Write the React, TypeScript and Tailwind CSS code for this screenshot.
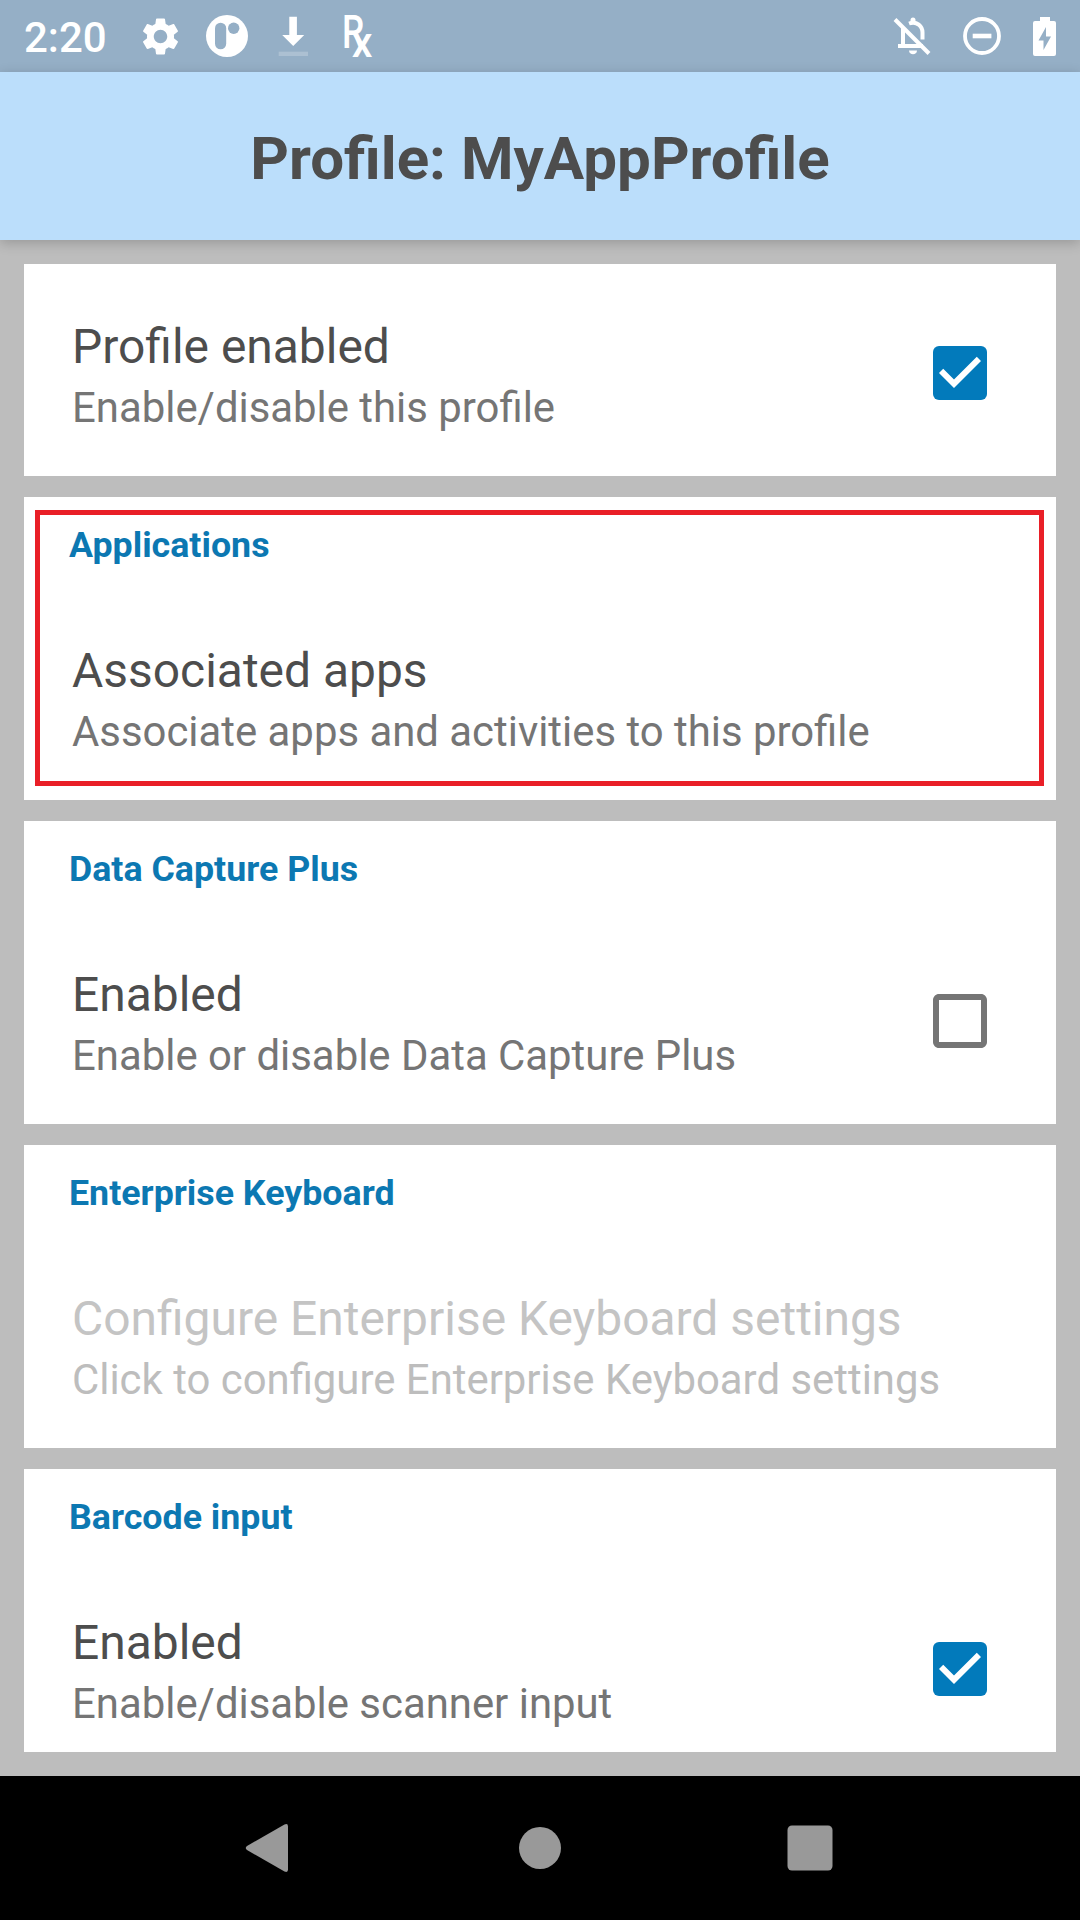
import React from "react";

function Checkbox({ checked }: { checked: boolean }) {
  return (
    <svg viewBox="0 0 24 24" className="h-[72px] w-[72px] shrink-0">
      {checked ? (
        <>
          <rect x="3" y="3" width="18" height="18" rx="2" fill="#027abb" />
          <path d="M10 17l-5-5 1.41-1.41L10 14.17l7.59-7.59L19 8l-9 9z" fill="#fff" />
        </>
      ) : (
        <path
          d="M19 5v14H5V5h14m0-2H5c-1.1 0-2 .9-2 2v14c0 1.1.9 2 2 2h14c1.1 0 2-.9 2-2V5c0-1.1-.9-2-2-2z"
          fill="#757575"
        />
      )}
    </svg>
  );
}

type Item = {
  category?: string;
  title: string;
  summary: string;
  checked?: boolean;
  disabled?: boolean;
  highlighted?: boolean;
};

const items: Item[] = [
  { title: "Profile enabled", summary: "Enable/disable this profile", checked: true },
  {
    category: "Applications",
    title: "Associated apps",
    summary: "Associate apps and activities to this profile",
    highlighted: true,
  },
  {
    category: "Data Capture Plus",
    title: "Enabled",
    summary: "Enable or disable Data Capture Plus",
    checked: false,
  },
  {
    category: "Enterprise Keyboard",
    title: "Configure Enterprise Keyboard settings",
    summary: "Click to configure Enterprise Keyboard settings",
    disabled: true,
  },
  { category: "Barcode input", title: "Enabled", summary: "Enable/disable scanner input", checked: true },
];

function Card({ item }: { item: Item }) {
  return (
    <section className="relative shrink-0 bg-white">
      {item.category && (
        <h2 className="h-[91px] pt-[27px] pl-[45px] text-[35.75px] leading-[42px] font-bold text-[#0c78b2]">
          {item.category}
        </h2>
      )}
      <div className="flex h-[212px] items-center justify-between pt-[6px] pr-[60px] pl-[48px]">
        <div className="pt-[4px] whitespace-nowrap">
          <p className={`text-[47.95px] leading-[56px] ${item.disabled ? "text-[#c4c4c4]" : "text-[#4d4d4d]"}`}>
            {item.title}
          </p>
          <p className={`mt-[8px] text-[41.88px] leading-[49px] ${item.disabled ? "text-[#bdbdbd]" : "text-[#757575]"}`}>
            {item.summary}
          </p>
        </div>
        {item.checked !== undefined && <Checkbox checked={item.checked} />}
      </div>
      {item.highlighted && (
        <div className="absolute top-[13px] right-[12px] bottom-[14px] left-[11px] border-5 border-[#e91f27]" />
      )}
    </section>
  );
}

function StatusBar() {
  return (
    <div className="flex h-[72px] shrink-0 items-center bg-[#95afc6] pl-[24px] text-white">
      <span className="w-[114px] pt-[2px] text-[42px] leading-[49px] font-medium">2:20</span>
      <svg viewBox="0 0 24 24" className="h-[45px] w-[45px]" fill="#fff">
        <path d="M19.14 12.94c.04-.3.06-.61.06-.94 0-.32-.02-.64-.07-.94l2.03-1.58c.18-.14.23-.41.12-.61l-1.92-3.32c-.12-.22-.37-.29-.59-.22l-2.39.96c-.5-.38-1.03-.7-1.62-.94l-.36-2.54c-.04-.24-.24-.41-.48-.41h-3.84c-.24 0-.43.17-.47.41l-.36 2.54c-.59.24-1.13.57-1.62.94l-2.39-.96c-.22-.08-.47 0-.59.22L2.74 8.87c-.12.21-.08.47.12.61l2.03 1.58c-.05.3-.09.63-.09.94s.02.64.07.94l-2.03 1.58c-.18.14-.23.41-.12.61l1.92 3.32c.12.22.37.29.59.22l2.39-.96c.5.38 1.03.7 1.62.94l.36 2.54c.05.24.24.41.48.41h3.84c.24 0 .44-.17.47-.41l.36-2.54c.59-.24 1.13-.56 1.62-.94l2.39.96c.22.08.47 0 .59-.22l1.92-3.32c.12-.22.07-.47-.12-.61l-2.01-1.58zM12 15.6c-1.98 0-3.6-1.62-3.6-3.6s1.62-3.6 3.6-3.6 3.6 1.62 3.6 3.6-1.62 3.6-3.6 3.6z" />
      </svg>
      <svg viewBox="0 0 42 42" className="ml-[23px] h-[42px] w-[42px]">
        <circle cx="21" cy="21" r="21" fill="#fff" />
        <rect x="9" y="7.7" width="11.2" height="26.6" rx="5.6" fill="#95afc6" />
        <circle cx="27.7" cy="13.2" r="5.7" fill="#95afc6" />
      </svg>
      <svg viewBox="0 0 30 40" className="ml-[30px] h-[40px] w-[30px]" fill="#fff">
        <path d="M11.3 .7h7.6V19h7.3L15.2 30 4.2 19h7.1z" />
        <rect x=".7" y="35.7" width="29.3" height="4.3" opacity=".22" />
      </svg>
      <svg viewBox="0 0 40 72" className="ml-[34px] h-[72px] w-[40px] overflow-visible" fill="#fff">
        <text transform="translate(0 48.3) scale(.77 1)" fontSize="46" fontWeight="500" fontFamily="Roboto, sans-serif">
          R
        </text>
        <text transform="translate(9.8 57) scale(.96 1)" fontSize="43" fontWeight="500" fontFamily="Roboto, sans-serif">
          x
        </text>
      </svg>
      <div className="ml-auto flex items-center pr-[24px]">
        <svg viewBox="0 0 38 38" className="h-[38px] w-[38px]" fill="none" stroke="#fff" strokeWidth="4">
          <path d="M10 11v18M5 29h25M16 6.5c8-3 13.500 3 13.500 9v7" />
          <path d="M20 4.500v-1.500" strokeWidth="5" strokeLinecap="round" />
          <path d="M16 33.500h8c0 5-8 5-8 0z" fill="#fff" stroke="none" />
          <path d="M2 2.500l34 34" />
        </svg>
        <svg viewBox="0 0 38 38" className="ml-[32px] h-[38px] w-[38px]">
          <circle cx="19" cy="19" r="17" fill="none" stroke="#fff" strokeWidth="3.8" />
          <rect x="9.7" y="16.7" width="18.7" height="4.6" fill="#fff" />
        </svg>
        <svg viewBox="0 0 23 39" className="ml-[32px] h-[39px] w-[23px]">
          <path d="M7 0h10v4h4a2 2 0 0 1 2 2v31a2 2 0 0 1-2 2H2a2 2 0 0 1-2-2V6a2 2 0 0 1 2-2h5z" fill="#fff" />
          <path d="M13 10v9.500h5L10.500 33v-9.500h-5z" fill="#95afc6" />
        </svg>
      </div>
    </div>
  );
}

export default function App() {
  return (
    <div className="flex h-[1920px] w-[1080px] flex-col overflow-hidden bg-[#bdbdbd] font-[Roboto,sans-serif]">
      <StatusBar />
      <header className="z-10 flex h-[168px] shrink-0 items-center justify-center bg-[#bbdefb] pt-[5px] shadow-[0_3px_12px_rgba(0,0,0,0.2)]">
        <h1 className="text-[60.1px] leading-[70px] font-bold text-[#4d4d4d]">Profile: MyAppProfile</h1>
      </header>
      <main className="mx-[24px] mt-[24px] flex h-[1488px] shrink-0 flex-col gap-[21px] overflow-hidden">
        {items.map((item, i) => (
          <Card key={i} item={item} />
        ))}
      </main>
      <nav className="mt-[24px] flex h-[144px] shrink-0 items-center justify-center gap-[198px] bg-black">
        <svg viewBox="0 0 72 72" className="h-[72px] w-[72px]" fill="#999">
          <path d="M13 34L50.500 12.500q3.500-1.500 3.500 2v43q0 3.500-3.500 2L13 38q-2.500-2 0-4z" />
        </svg>
        <svg viewBox="0 0 72 72" className="h-[72px] w-[72px]" fill="#999">
          <circle cx="36" cy="36" r="21" />
        </svg>
        <svg viewBox="0 0 72 72" className="h-[72px] w-[72px]" fill="#999">
          <rect x="13.5" y="13.5" width="45" height="45" rx="4.5" />
        </svg>
      </nav>
    </div>
  );
}
